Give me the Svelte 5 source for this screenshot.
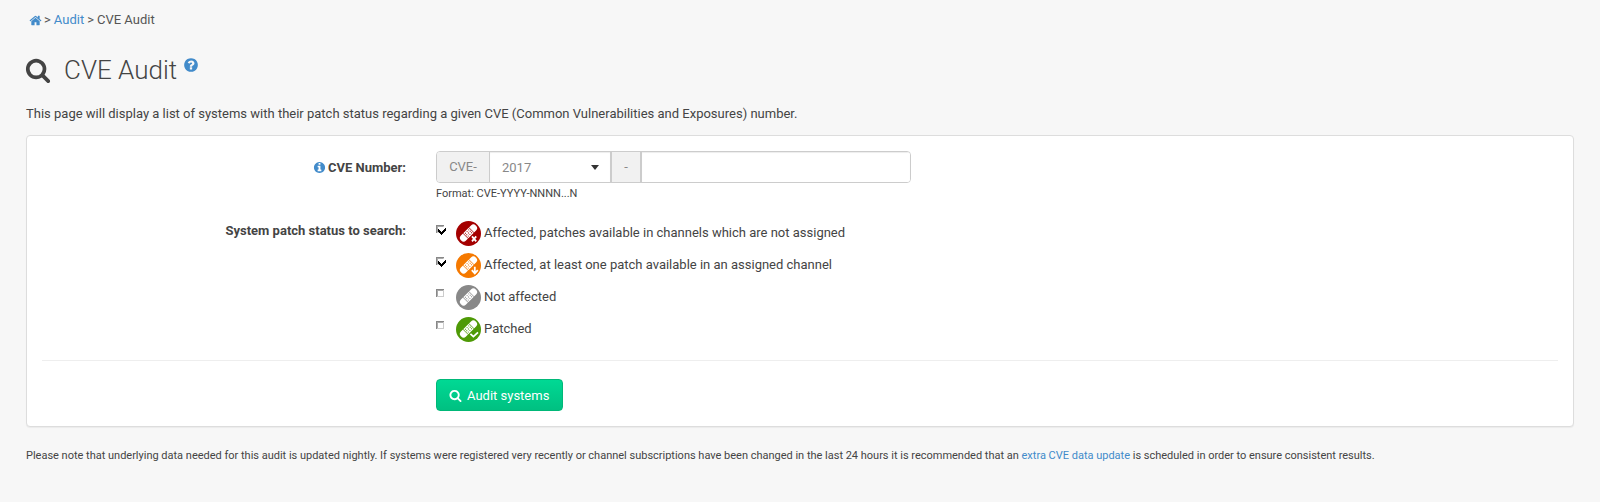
<script>
  const tail = 'q0 209-103 385.5t-279.5 279.5-385.5 103-385.5-103-279.5-279.5-103-385.5 103-385.5 279.5-279.5 385.5-103 385.5 103 279.5 279.5 103 385.5z';
  const icons = {
    search: 'M1216 832q0-185-131.5-316.5T768 384 451.5 515.5 320 832t131.5 316.5T768 1280t316.5-131.5T1216 832zm512 832q0 52-38 90t-90 38q-54 0-90-38l-343-342q-179 124-399 124-143 0-273.5-55.5t-225-150-150-225T64 832t55.5-273.5 150-225 225-150T768 128t273.5 55.5 225 150 150 225T1472 832q0 220-124 399l343 343q37 37 37 90z',
    home: 'M1472 992v480q0 26-19 45t-45 19h-384v-384h-256v384h-384q-26 0-45-19t-19-45v-480q0-1 .5-3t.5-3l575-474 575 474q1 2 1 6zm223-69l-62 74q-8 9-21 11h-3q-13 0-21-7l-692-577-692 577q-12 8-24 7-13-2-21-11l-62-74q-8-10-7-23.5t11-21.5l719-599q32-26 76-26t76 26l244 204v-195q0-14 9-23t23-9h192q14 0 23 9t9 23v408l219 182q10 8 11 21.5t-7 23.5z',
    help: 'M1024 1376v-192q0-14-9-23t-23-9h-192q-14 0-23 9t-9 23v192q0 14 9 23t23 9h192q14 0 23-9t9-23zm256-672q0-88-55.5-163t-138.5-116-170-41q-243 0-371 213-15 24 8 42l132 100q7 6 19 6 16 0 25-12 53-68 86-92 34-24 86-24 48 0 85.5 26t37.5 59q0 38-20 61t-68 45q-63 28-115.5 86.5t-52.5 125.5v36q0 14 9 23t23 9h192q14 0 23-9t9-23q0-19 21.5-49.5t54.5-49.5q32-18 49-28.5t46-35 44.5-48 28-60.5 12.5-81zm384 192' + tail,
    info: 'M1152 1376v-160q0-14-9-23t-23-9h-96v-512q0-14-9-23t-23-9h-320q-14 0-23 9t-9 23v160q0 14 9 23t23 9h96v320h-96q-14 0-23 9t-9 23v160q0 14 9 23t23 9h448q14 0 23-9t9-23zm-128-896v-160q0-14-9-23t-23-9h-192q-14 0-23 9t-9 23v160q0 14 9 23t23 9h192q14 0 23-9t9-23zm640 416' + tail
  };
  let statuses = $state([
    { label: 'Affected, patches available in channels which are not assigned', color: '#a40000', mark: 'M16 16.4l4.2 5M20.2 16.4l-4.2 5', checked: true },
    { label: 'Affected, at least one patch available in an assigned channel', color: '#f57900', mark: 'M18.8 14.8v6.4M15.8 18.2l3 3.2l3-3.2', checked: true },
    { label: 'Not affected', color: '#888888', mark: '', checked: false },
    { label: 'Patched', color: '#4e9a06', mark: 'M14.4 17.8l3 2.8l4.6-4.2', checked: false }
  ]);
</script>

{#snippet icon(name, size)}
  <svg class="icon" width={size} height={size} viewBox="0 0 1792 1792"><path d={icons[name]} /></svg>
{/snippet}

<main>
  <nav><a href="#home" aria-label="Home">{@render icon('home', 13)}</a><span>&gt;</span><a href="#audit">Audit</a><span>&gt;</span><span>CVE Audit</span></nav>
  <h1>{@render icon('search', 26)}<span>CVE Audit</span><a href="#help" aria-label="Help">{@render icon('help', 16)}</a></h1>
  <p class="intro">This page will display a list of systems with their patch status regarding a given CVE (Common Vulnerabilities and Exposures) number.</p>

  <section class="panel">
    <div class="row number">
      <div class="label"><span class="info">{@render icon('info', 13)}</span>CVE Number:</div>
      <div>
        <div class="group">
          <span class="addon prefix">CVE-</span>
          <span class="select">2017<i></i></span>
          <span class="addon dash">-</span>
          <input type="text" aria-label="CVE number" />
        </div>
        <div class="format">Format: CVE-YYYY-NNNN...N</div>
      </div>
    </div>
    <div class="row status">
      <div class="label">System patch status to search:</div>
      <div>
        {#each statuses as s}
          <label class="option">
            <input type="checkbox" bind:checked={s.checked} />
            <svg class="check" width="12" height="12" viewBox="0 0 12 12" shape-rendering="crispEdges">
              <path d="M.5 8V.5H8" fill="none" stroke="#888" />
              <path d="M1.5 7V1.5H7" fill="none" stroke="#aaa" />
              <path d="M1 7.5H7.5V1" fill="none" stroke="#ccc" />
              {#if s.checked}
                <path d="M4 2h6v4h-3v3h-3z" fill="#fff" />
                <path d="M2 4h1v1h1v1h1v1h1v-1h1v-1h1v-1h1v-1h1v3h-1v1h-1v1h-1v1h-1v1h-1v-1h-1v-1h-1v-1h-1z" fill="#000" />
              {/if}
            </svg>
            <svg class="badge" width="26" height="26" viewBox="0 0 26 26">
              <circle cx="12.5" cy="13.5" r="12.5" fill={s.color} />
              <g transform="rotate(-45 12.5 13)">
                <rect x="2" y="9.4" width="21" height="7.2" rx="3.4" fill="#fff" />
                <path d="M8.4 9v8M16.6 9v8" stroke={s.color} stroke-width=".8" />
                <path d="M10.1 10.5v5M12.5 10.5v5M14.9 10.5v5" stroke={s.color} stroke-width="1" stroke-dasharray="1 1" />
              </g>
              {#if s.mark}
                <path d={s.mark} fill="none" stroke={s.color} stroke-width="3.8" />
                <path d={s.mark} fill="none" stroke="#fff" stroke-width="1.8" />
              {/if}
            </svg>
            <span>{s.label}</span>
          </label>
        {/each}
      </div>
    </div>
    <hr />
    <button>{@render icon('search', 13)}<span>Audit systems</span></button>
  </section>

  <p class="note">Please note that underlying data needed for this audit is updated nightly. If systems were registered very recently or channel subscriptions have been changed in the last 24 hours it is recommended that an <a href="#update">extra CVE data update</a> is scheduled in order to ensure consistent results.</p>
</main>

<style>
  :global(body) { background: #f7f7f7; }
  main { box-sizing: border-box; width: 1600px; height: 502px; padding: 10px 26px 0; font: 13px/20px Roboto, sans-serif; color: #444; }
  a { color: #428bca; text-decoration: none; }
  .icon { fill: currentColor; display: block; flex: none; }
  nav { display: flex; align-items: center; gap: 3px; padding-left: 3px; height: 20px; color: #555; }
  nav > a:first-child { margin-right: -1px; }
  h1 { display: flex; align-items: center; height: 40px; margin: 20px 0 0; font-size: 26px; font-weight: 300; line-height: 40px; color: #444; }
  h1 > .icon { margin-left: -1px; }
  h1 span { margin-left: 13px; }
  h1 a { margin: -11px 0 0 6px; }
  .intro { margin: 14px 0 0; height: 20px; }
  .panel { box-sizing: border-box; width: 1548px; height: 292px; margin-top: 11px; padding: 15px; background: #fff; border: 1px solid #ddd; border-radius: 4px; box-shadow: 0 1px 1px rgba(0, 0, 0, .05); }
  .row { display: grid; grid-template-columns: 364px 1fr; column-gap: 30px; }
  .number { height: 70px; }
  .label { display: flex; justify-content: flex-end; height: 20px; font-weight: 700; }
  .number .label { padding-top: 7px; align-items: center; }
  .info { color: #428bca; margin: -1px 2px 0 0; }
  .group { display: flex; width: 475px; height: 32px; box-sizing: border-box; border: 1px solid #ccc; border-radius: 4px; overflow: hidden; color: #888; line-height: 30px; }
  .addon { box-sizing: border-box; background: #f1f1f1; text-align: center; line-height: 29px; }
  .prefix { width: 53px; border-right: 1px solid #ccc; }
  .select { box-sizing: border-box; width: 120px; padding: 1px 11px 0 12px; display: flex; justify-content: space-between; align-items: center; box-shadow: inset 0 1px 1px rgba(0, 0, 0, .075); }
  .select i { border: 4.5px solid transparent; border-top: 5px solid #333; border-bottom: 0; }
  .dash { width: 32px; border: solid #ccc; border-width: 0 2px; }
  .group input { flex: 1; min-width: 0; border: 0; padding: 0 12px; box-shadow: inset 0 1px 1px rgba(0, 0, 0, .075); font: inherit; outline: 0; }
  .format { font-size: 11px; line-height: 22px; }
  .option { display: flex; align-items: center; height: 32px; }
  .option input { appearance: none; width: 0; height: 0; margin: 0; }
  .check { margin: -4px 8px 0 0; }
  .badge { margin-right: 2px; }
  .status > div:last-child { margin-top: -4px; height: 128px; }
  hr { height: 1px; border: 0; margin: 15px 0 18px; background: #eee; }
  button { display: flex; align-items: center; gap: 5px; box-sizing: border-box; width: 127px; height: 32px; margin-left: 394px; padding: 1px 0 0 12px; border: 1px solid #00b878; border-radius: 4px; background: linear-gradient(#00d994, #00c081); color: #fff; font: inherit; }
  .note { margin: 19px 0 0; font-size: 11px; letter-spacing: -.008px; white-space: nowrap; }
</style>
